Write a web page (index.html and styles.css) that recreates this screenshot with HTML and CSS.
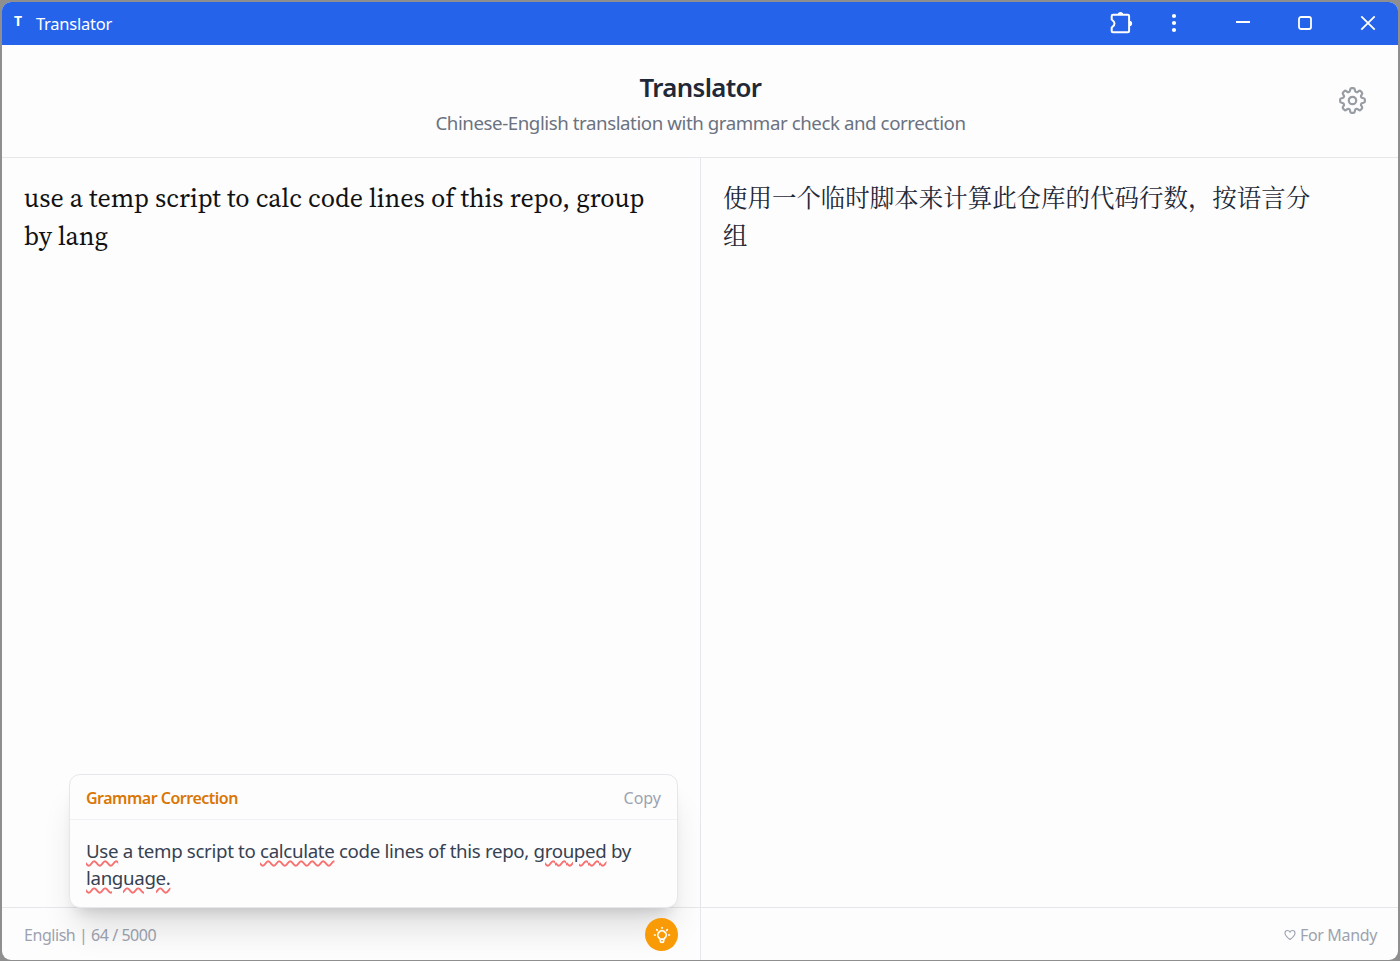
FILE: index.html
```html
<!DOCTYPE html>
<html lang="en">
<head>
    <meta charset="UTF-8">
    <meta name="viewport" content="width=device-width, initial-scale=1.0">
    <title>Translator</title>
    <link rel="stylesheet" href="styles.css">
</head>
<body>

<div class="window">
    <!-- Title bar -->
    <div class="titlebar">
        <span class="app-icon">T</span>
        <span class="app-name">Translator</span>
        <div class="window-buttons">
            <svg class="win-icon extensions" viewBox="0 0 24 24" fill="none" stroke="currentColor" stroke-width="2" stroke-linejoin="round">
                <path d="M4 3.800h14.800q1.300 0 1.300 1.300v14.800q0 1.300-1.300 1.300H4q-1.300 0-1.300-1.300v-3.400c.3-.8 2.800-1.400 2.800-4s-2.500-3.200-2.800-4V5.100q0-1.300 1.300-1.300z"/>
                <path d="M8.800 3.500a2.700 2.600 0 0 1 5.400 0zM20.500 9.800a2.600 2.700 0 0 1 0 5.400z" fill="currentColor" stroke="none"/>
            </svg>
            <svg class="win-icon menu" viewBox="0 0 24 24" fill="currentColor">
                <circle cx="12" cy="5" r="2.1"/><circle cx="12" cy="12" r="2.1"/><circle cx="12" cy="19" r="2.1"/>
            </svg>
            <svg class="win-icon minimize" viewBox="0 0 24 24" fill="none" stroke="currentColor" stroke-width="2">
                <path d="M5 11H19"/>
            </svg>
            <svg class="win-icon maximize" viewBox="0 0 24 24" fill="none" stroke="currentColor" stroke-width="1.8">
                <rect x="6" y="6" width="12" height="12" rx="2"/>
            </svg>
            <svg class="win-icon close" viewBox="0 0 24 24" fill="none" stroke="currentColor" stroke-width="1.8">
                <path d="M5.3 5.3l13.4 13.4M18.7 5.3L5.3 18.7"/>
            </svg>
        </div>
    </div>

    <!-- Header -->
    <header class="header">
        <div class="heading">
            <h1>Translator</h1>
            <p>Chinese-English translation with grammar check and correction</p>
        </div>
        <button class="settings-button" aria-label="Settings">
            <svg viewBox="0 0 24 24" fill="none" stroke="currentColor" stroke-width="1.6" stroke-linecap="round" stroke-linejoin="round">
                <path d="M10.343 3.94c.09-.542.56-.94 1.11-.94h1.093c.55 0 1.02.398 1.11.94l.149.894c.07.424.384.764.78.93.398.164.855.142 1.205-.108l.737-.527a1.125 1.125 0 011.45.12l.773.774c.39.389.44 1.002.12 1.45l-.527.737c-.25.35-.272.806-.107 1.204.165.397.505.71.93.78l.893.15c.543.09.94.56.94 1.109v1.094c0 .55-.397 1.02-.94 1.11l-.893.149c-.425.07-.765.383-.93.78-.165.398-.143.854.107 1.204l.527.738c.32.447.269 1.06-.12 1.45l-.774.773a1.125 1.125 0 01-1.449.12l-.738-.527c-.35-.25-.806-.272-1.203-.107-.397.165-.71.505-.781.929l-.149.894c-.09.542-.56.94-1.11.94h-1.094c-.55 0-1.019-.398-1.11-.94l-.148-.894c-.071-.424-.384-.764-.781-.93-.398-.164-.854-.142-1.204.108l-.738.527c-.447.32-1.06.269-1.45-.12l-.773-.774a1.125 1.125 0 01-.12-1.45l.527-.737c.25-.35.273-.806.108-1.204-.165-.397-.505-.71-.93-.78l-.894-.15c-.542-.09-.94-.56-.94-1.109v-1.094c0-.55.398-1.02.94-1.11l.894-.149c.424-.07.765-.383.93-.78.165-.398.143-.854-.107-1.204l-.527-.738a1.125 1.125 0 01.12-1.45l.773-.773a1.125 1.125 0 011.45-.12l.737.527c.35.25.807.272 1.204.107.397-.165.71-.505.78-.929l.15-.894z"/>
                <circle cx="12" cy="12" r="2.7"/>
            </svg>
        </button>
    </header>

    <!-- Source and result -->
    <main class="panes">
        <section class="pane source">
            <div class="pane-text source-text">use a temp script to calc code lines of this repo, group<br>by lang</div>
            <div class="pane-footer">
                <span class="counter">English | 64 / 5000</span>
                <button class="hint-button" aria-label="Grammar">
                    <svg viewBox="0 0 24 24" fill="none" stroke="currentColor" stroke-width="2" stroke-linecap="round" stroke-linejoin="round">
                        <path d="M9.663 17h4.673M12 3v1m6.364 1.636l-.707.707M21 12h-1M4 12H3m3.343-5.657l-.707-.707m2.828 9.9a5 5 0 117.072 0l-.548.547A3.374 3.374 0 0014 18.469V19a2 2 0 11-4 0v-.531c0-.895-.356-1.754-.988-2.386l-.548-.547z"/>
                    </svg>
                </button>
            </div>

            <!-- Grammar popup, floats over the text and footer -->
            <div class="grammar-card">
                <div class="grammar-head">
                    <span class="grammar-title">Grammar Correction</span>
                    <button class="copy-button">Copy</button>
                </div>
                <div class="grammar-body"><span class="fix">Use</span> a temp script to <span class="fix">calculate</span> code lines of this repo, <span class="fix">grouped</span> by<br><span class="fix">language.</span></div>
            </div>
        </section>

        <section class="pane result">
            <div class="pane-text result-text" lang="zh-CN">使用一个临时脚本来计算此仓库的代码行数，按语言分组</div>
            <div class="pane-footer">
                <span class="dedication">
                    <svg viewBox="0 0 24 24" fill="none" stroke="currentColor" stroke-width="2.2" stroke-linejoin="round">
                        <path d="M12 21C5 15.500 2 12 2 8.300 2 5.300 4.200 3 7 3c2.200 0 4 1.200 5 3.300C13 4.200 14.800 3 17 3c2.800 0 5 2.300 5 5.300C22 12 19 15.500 12 21z"/>
                    </svg>
                    <span>For Mandy</span>
                </span>
            </div>
        </section>
    </main>
</div>

</body>
</html>
```
FILE: styles.css
```css
/* Global Styles */
* {
    box-sizing: border-box;
}

body {
    margin: 0;
    padding: 2px 2px 1px;
    height: 961px;
    overflow: hidden;
    background-color: #8f8f8f;
    font-family: "Noto Sans", "Open Sans", "Noto Sans CJK SC", sans-serif;
    color: #1f2937;
}

button {
    padding: 0;
    border: none;
    background: none;
    font-family: inherit;
    cursor: pointer;
}

svg {
    display: block;
}

.window {
    display: flex;
    flex-direction: column;
    height: 958px;
    border-radius: 9px;
    overflow: hidden;
    background-color: #fdfdfe;
}

/* Title bar */
.titlebar {
    display: flex;
    align-items: center;
    height: 43px;
    flex-shrink: 0;
    padding: 0 18px 1px 12px;
    background-color: #2563eb;
    color: #fff;
}

.app-icon {
    width: 22px;
    margin-bottom: 5px;
    font-size: 14px;
    font-weight: 700;
    line-height: 16px;
}

.app-name {
    font-size: 16.500px;
    letter-spacing: -0.25px;
}

.window-buttons {
    display: flex;
    align-items: center;
    margin-left: auto;
}

.win-icon {
    width: 24px;
    height: 24px;
}

.extensions {
    margin-bottom: 1px;
}

.menu {
    margin-left: 29px;
}

.minimize {
    margin-left: 45px;
}

.maximize {
    margin-left: 38px;
}

.close {
    margin-left: 39px;
}

/* Header */
.header {
    display: flex;
    align-items: center;
    height: 113px;
    flex-shrink: 0;
    padding: 0 29px;
    border-bottom: 1px solid #e5e7eb;
}

.heading {
    flex: 1;
    padding: 8px 0 0 34px;
    text-align: center;
}

h1 {
    margin: 0;
    font-size: 25.800px;
    font-weight: 600;
    line-height: 36px;
    letter-spacing: -0.65px;
}

p {
    margin: 0;
    font-size: 18.700px;
    line-height: 36px;
    letter-spacing: -0.43px;
    color: #6b7280;
}

.settings-button {
    padding-bottom: 2px;
    color: #989ca3;
}

.settings-button svg {
    width: 33px;
    height: 33px;
}

/* Panes */
.panes {
    display: flex;
    flex: 1;
}

.pane {
    display: flex;
    flex-direction: column;
    width: 699px;
    position: relative;
}

.result {
    width: 697px;
}

.source {
    border-right: 1px solid #e5e7eb;
}

.pane-text {
    flex: 1;
    padding: 20px 22px;
    font-size: 24.480px;
    line-height: 38px;
}

.source-text {
    padding-top: 21px;
    font-family: "Source Serif 4", "Source Serif Pro", "Noto Serif", "Noto Serif CJK SC", "Liberation Serif", serif;
    font-size: 26px;
    color: #111;
    white-space: nowrap;
}

.result-text {
    padding-right: 70px;
    font-family: "Noto Serif CJK SC", "Noto Sans CJK SC", sans-serif;
}

.pane-footer {
    display: flex;
    align-items: center;
    justify-content: space-between;
    height: 53px;
    padding: 2px 22px 0;
    border-top: 1px solid #e5e7eb;
    font-size: 16px;
    color: #9ca3af;
}

.counter {
    letter-spacing: -0.45px;
}

.hint-button {
    display: flex;
    align-items: center;
    justify-content: center;
    width: 33px;
    height: 33px;
    margin-bottom: 1px;
    border-radius: 50%;
    background-color: #f99b07;
    color: #fff;
    z-index: 2;
}

.hint-button svg {
    width: 20px;
    height: 20px;
}

.dedication {
    display: flex;
    align-items: center;
    gap: 4px;
    margin-left: auto;
    margin-right: -1px;
    letter-spacing: -0.35px;
}

.dedication svg {
    width: 12px;
    height: 12px;
}

/* Grammar popup */
.grammar-card {
    position: absolute;
    left: 67px;
    right: 22px;
    bottom: 52px;
    height: 134px;
    border: 1px solid #e5e7eb;
    border-radius: 11px;
    background-color: #fdfdfe;
    box-shadow: 0 27px 34px -7px rgba(0, 0, 0, 0.12), 0 11px 14px -8px rgba(0, 0, 0, 0.15);
}

.grammar-head {
    display: flex;
    align-items: center;
    justify-content: space-between;
    height: 45px;
    padding: 1px 16px 0;
    border-bottom: 1px solid #f0f1f4;
    font-size: 16px;
}

.grammar-title {
    font-weight: 600;
    letter-spacing: -0.5px;
    color: #d97706;
}

.copy-button {
    font-size: 16px;
    color: #9ca3af;
}

.grammar-body {
    padding: 17px 16px;
    font-size: 18.700px;
    line-height: 27.200px;
    letter-spacing: -0.33px;
    color: #374151;
    white-space: nowrap;
}

.fix {
    text-decoration: underline wavy #f87171 1.800px;
    text-underline-offset: 2px;
}
```
